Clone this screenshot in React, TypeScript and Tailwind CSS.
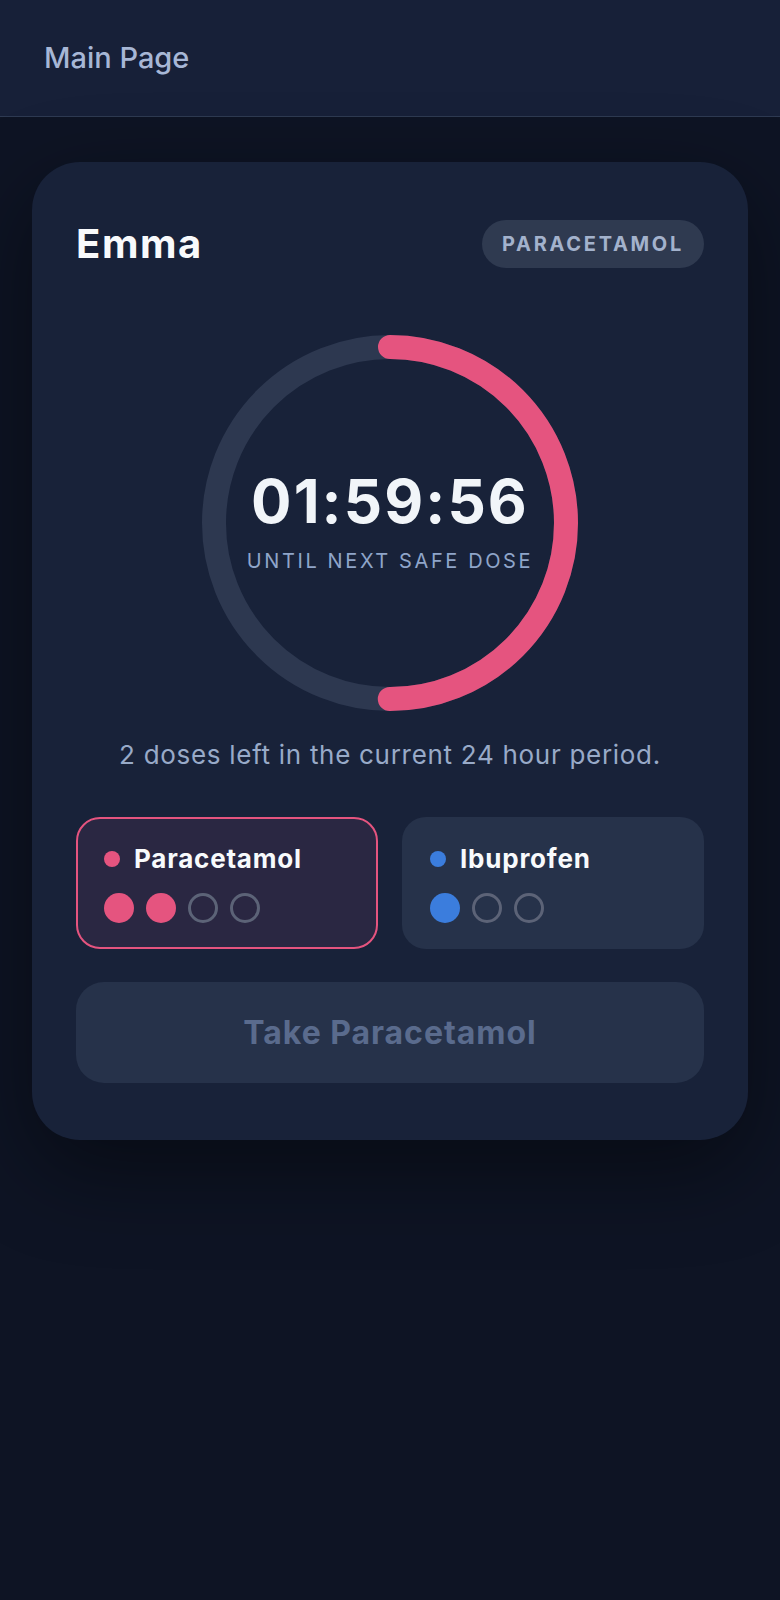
import React from "react";

type Med = {
  name: string;
  color: string;
  taken: number;
  max: number;
  active?: boolean;
};

const meds: Med[] = [
  { name: "Paracetamol", color: "bg-[#e5547f]", taken: 2, max: 4, active: true },
  { name: "Ibuprofen", color: "bg-[#3b7ddd]", taken: 1, max: 3 },
];

const R = 176;
const C = 2 * Math.PI * R;

function Countdown({ progress }: { progress: number }) {
  return (
    <div className="relative mx-auto mt-[65px] w-[376px] h-[376px]">
      <svg width="376" height="376" viewBox="0 0 376 376" className="block -rotate-90">
        <circle cx="188" cy="188" r={R} fill="none" stroke="#2d3850" strokeWidth="24" />
        <circle
          cx="188"
          cy="188"
          r={R}
          fill="none"
          stroke="#e5547f"
          strokeWidth="24"
          strokeLinecap="round"
          strokeDasharray={`${C * progress} ${C}`}
        />
      </svg>
      <div className="absolute inset-0 flex flex-col items-center justify-center">
        <div className="text-[60px] leading-none font-bold text-[#f1f5f9] tracking-[0.035em]">01:59:56</div>
        <div className="mt-4 text-[20px] leading-7 text-[#8fa5c9] tracking-[0.13em]">UNTIL NEXT SAFE DOSE</div>
      </div>
    </div>
  );
}

function MedCard({ med }: { med: Med }) {
  return (
    <div
      className={
        med.active
          ? "rounded-3xl border-2 border-[#e5547f] bg-[#2a2742] pt-[28px] pb-6 px-[26px]"
          : "rounded-3xl border-2 border-transparent bg-[#26324a] pt-[28px] pb-6 px-[26px]"
      }
    >
      <div className="flex items-center gap-3.5 h-6">
        <span className={`w-4 h-4 rounded-full ${med.color}`} />
        <span className="text-[26px] leading-6 font-bold tracking-[0.03em] text-[#f8fafc]">{med.name}</span>
      </div>
      <div className="flex gap-3 mt-[22px]">
        {Array.from({ length: med.max }).map((_, i) =>
          i < med.taken ? (
            <span key={i} className={`w-[30px] h-[30px] rounded-full ${med.color}`} />
          ) : (
            <span key={i} className="w-[30px] h-[30px] rounded-full border-[3px] border-[#5c6377]" />
          )
        )}
      </div>
    </div>
  );
}

export default function App() {
  return (
    <div className="min-h-[1600px] bg-[#0e1424] font-['Inter','Noto_Sans',sans-serif]">
      <header className="h-[117px] flex items-center px-11 bg-[#172038] border-b border-[#2e3a52]">
        <span className="text-[29px] font-medium text-[#a7b7d6]">Main Page</span>
      </header>

      <main className="mx-8 mt-[45px] rounded-[48px] bg-[#182239] px-11 pt-14 pb-[57px] shadow-[0_30px_90px_rgba(0,0,0,0.45)]">
        <div className="flex items-center justify-between h-[52px]">
          <h1 className="text-[40px] leading-[52px] font-bold tracking-[0.04em] text-[#f8fafc]">Emma</h1>
          <span className="h-12 px-5 flex items-center rounded-full bg-[#2f3a50] text-[20px] font-bold tracking-[0.135em] text-[#a3b2cc]">
            PARACETAMOL
          </span>
        </div>

        <Countdown progress={0.5} />

        <p className="mt-7 text-center text-[26px] leading-8 tracking-[0.027em] text-[#98aac8]">
          2 doses left in the current 24 hour period.
        </p>

        <div className="grid grid-cols-2 gap-6 mt-[46px]">
          {meds.map((m) => (
            <MedCard key={m.name} med={m} />
          ))}
        </div>

        <button className="mt-[33px] w-full h-[101px] rounded-[28px] bg-[#26324a] text-[32px] font-bold tracking-[0.03em] text-[#5a6b8d]">
          Take Paracetamol
        </button>
      </main>
    </div>
  );
}
